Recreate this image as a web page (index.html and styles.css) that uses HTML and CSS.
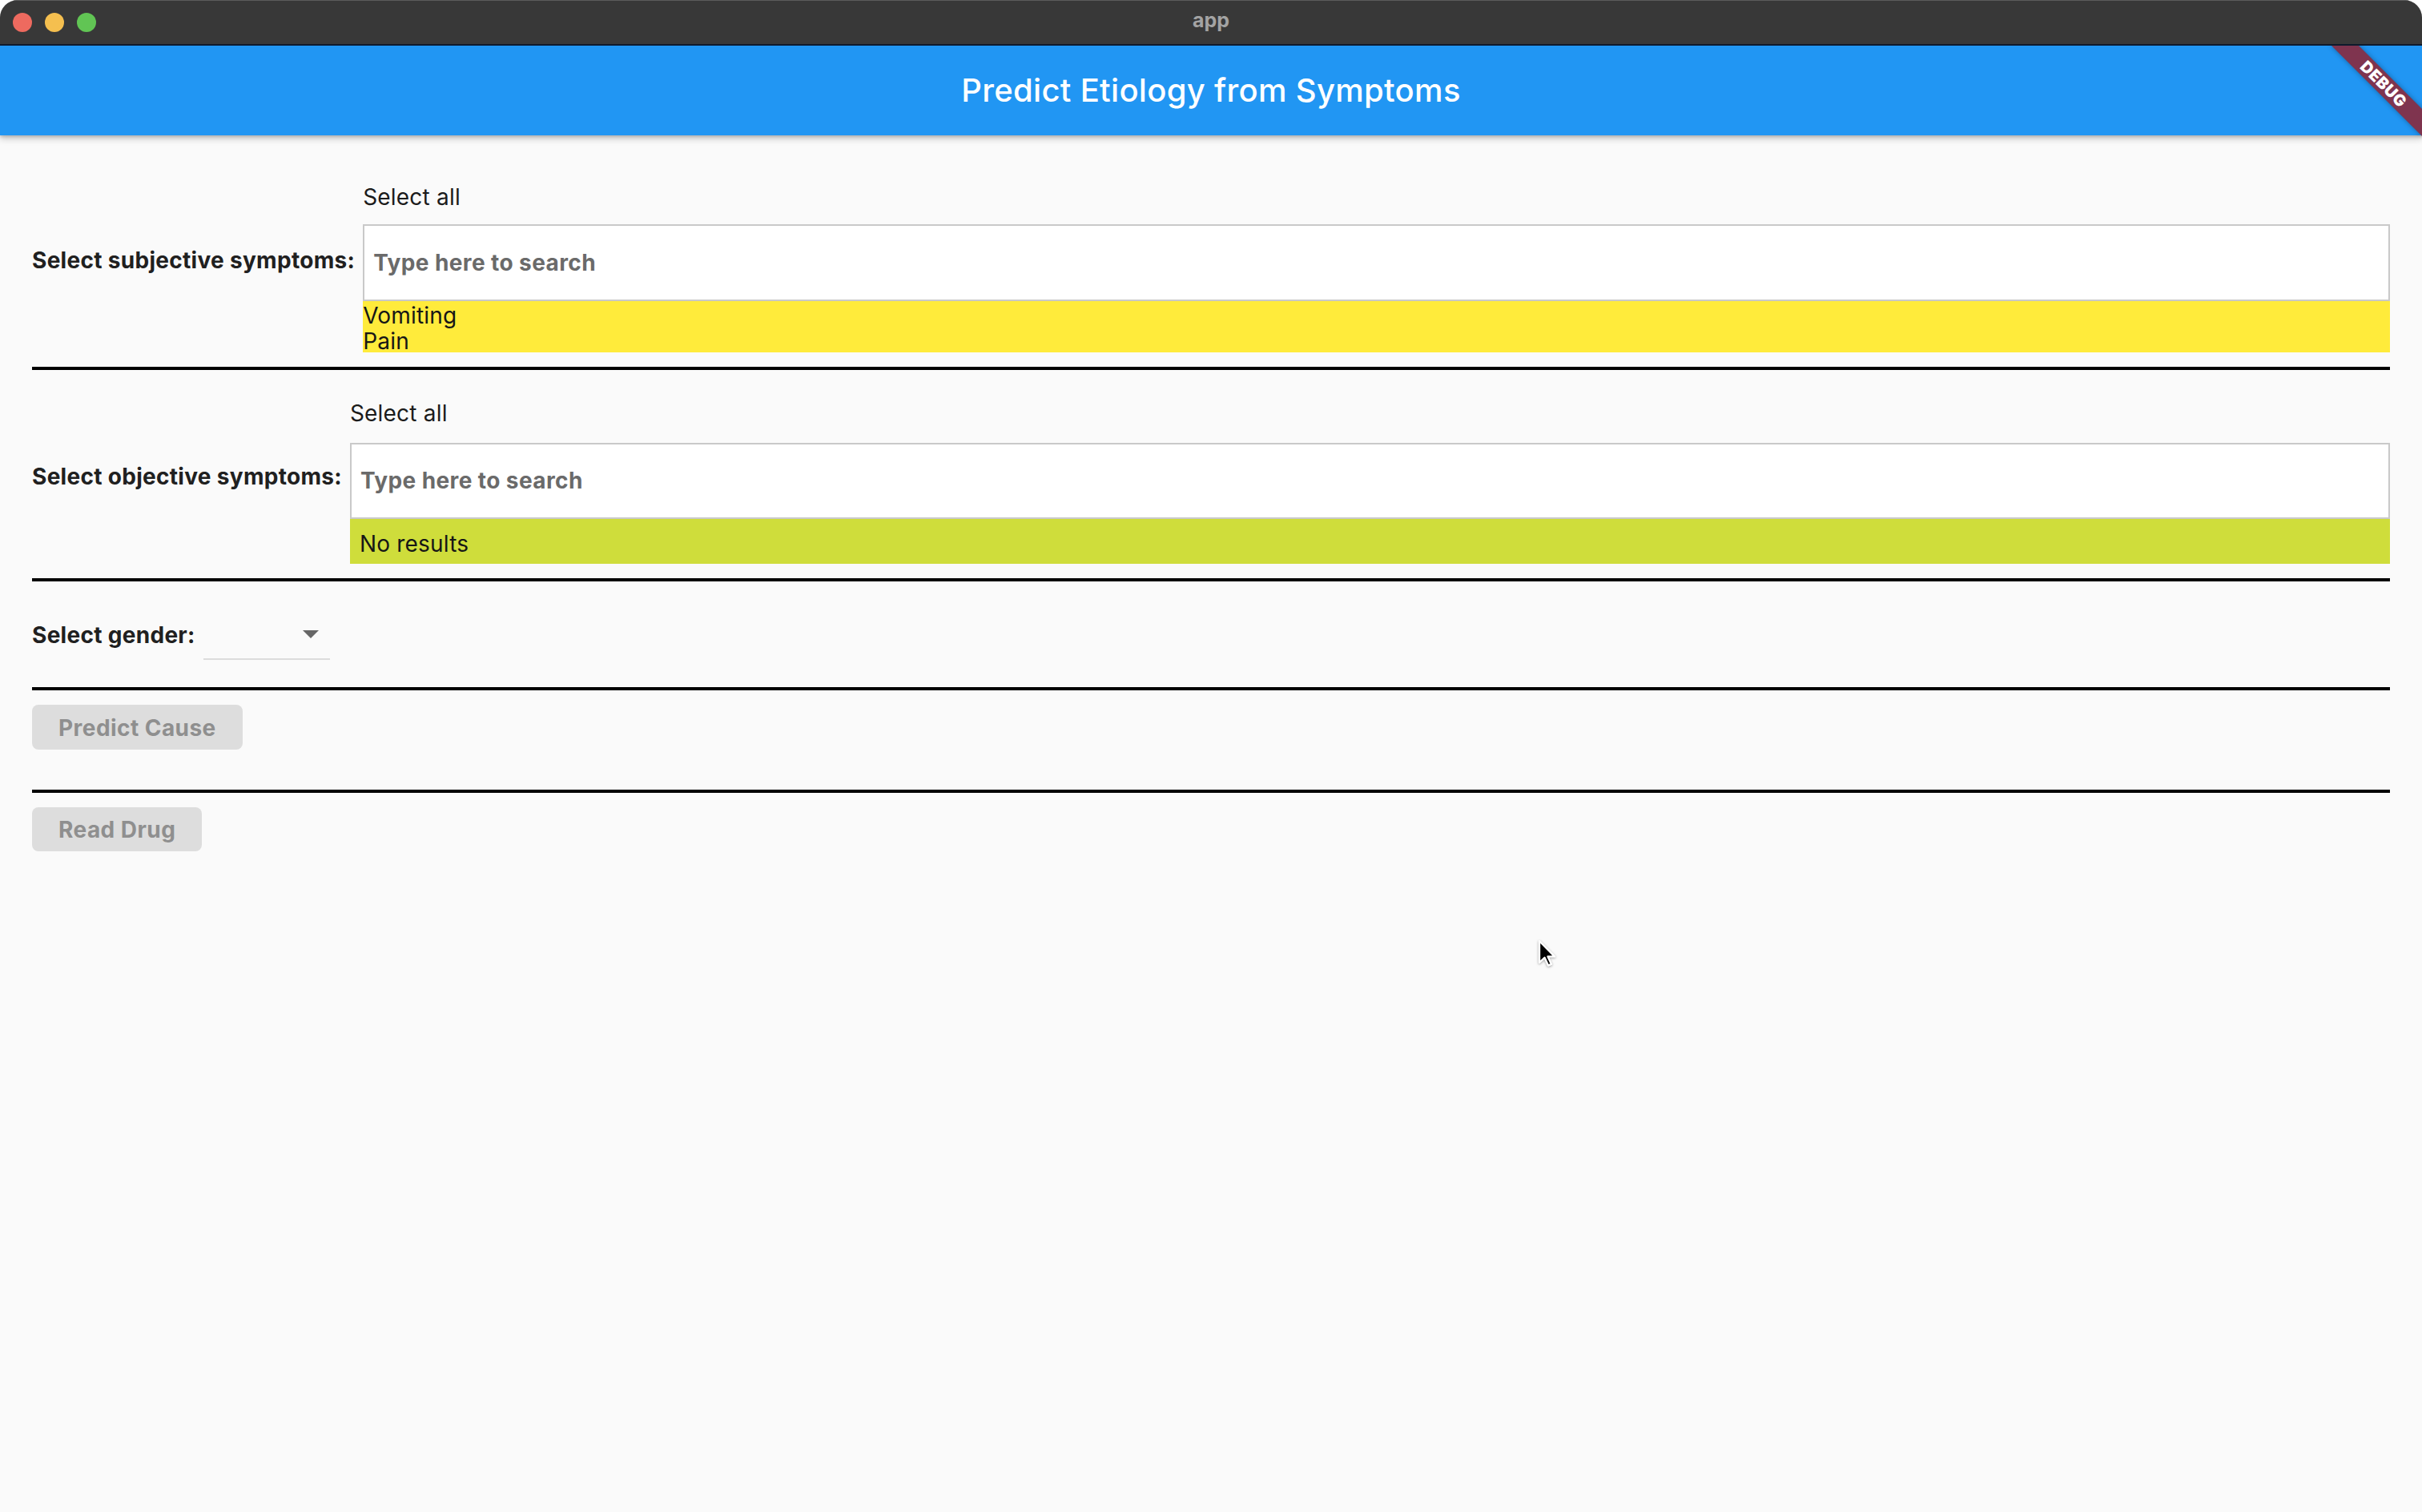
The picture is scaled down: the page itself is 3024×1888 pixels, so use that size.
FILE: index.html
```html
<!DOCTYPE html>
<html lang="en">
<head>
<meta charset="utf-8">
<title>app</title>
<link rel="stylesheet" href="styles.css">
</head>
<body>
<div class="window">
  <div class="titlebar">
    <div class="lights">
      <span class="light l-close"></span>
      <span class="light l-min"></span>
      <span class="light l-max"></span>
    </div>
    <div class="wintitle">app</div>
    <div></div>
  </div>
  <div class="app">
    <header class="appbar"><h1>Predict Etiology from Symptoms</h1></header>
    <div class="banner"><span>DEBUG</span></div>
    <main class="content">
      <section class="row sect1">
        <div class="label">Select subjective symptoms:</div>
        <div class="col">
          <div class="select-all">Select all</div>
          <div class="search"><span class="hint">Type here to search</span></div>
          <div class="results res-yellow">
            <div class="item">Vomiting</div>
            <div class="item">Pain</div>
          </div>
        </div>
      </section>
      <div class="divider d1"></div>
      <section class="row sect2">
        <div class="label">Select objective symptoms:</div>
        <div class="col">
          <div class="select-all">Select all</div>
          <div class="search s2"><span class="hint">Type here to search</span></div>
          <div class="results res-lime">No results</div>
        </div>
      </section>
      <div class="divider d2"></div>
      <section class="gender-row">
        <div class="label">Select gender:</div>
        <div class="dropdown"><span class="arrow"></span></div>
      </section>
      <div class="divider d3"></div>
      <button class="btn b1" disabled>Predict Cause</button>
      <div class="divider d4"></div>
      <button class="btn b2" disabled>Read Drug</button>
    </main>
  </div>
  <svg class="cursor" width="26" height="38" viewBox="0 0 26 38">
    <path d="M3 2 L3 29 L9.5 22.8 L14 32.6 L18 30.9 L13.6 21.4 L22 21.4 Z" fill="#000" stroke="#fff" stroke-width="2.4" stroke-linejoin="round"/>
  </svg>
</div>
</body>
</html>
```

FILE: styles.css
```css
* { box-sizing: border-box; }
html, body { margin: 0; padding: 0; }
body {
  background: #ffffff;
  font-family: Inter, "Noto Sans", "Liberation Sans", sans-serif;
  width: 3024px;
  height: 1888px;
  overflow: hidden;
}
.window {
  position: relative;
  width: 3024px;
  height: 1888px;
  background: #fafafa;
  border-radius: 22px 22px 0 0;
  overflow: hidden;
}
.titlebar {
  height: 57px;
  background: #383838;
  border-bottom: 2px solid #0f1a2c;
  display: grid;
  grid-template-columns: 1fr auto 1fr;
  align-items: start;
  box-shadow: inset 0 1px 0 #5c5c5c;
}
.lights {
  display: flex;
  gap: 16px;
  padding: 16px 0 0 16px;
}
.light {
  width: 24px;
  height: 24px;
  border-radius: 50%;
  display: block;
}
.l-close { background: #ee6a5f; }
.l-min { background: #f5bf4f; }
.l-max { background: #61c554; }
.wintitle {
  color: #a3a3a3;
  font-size: 25px;
  font-weight: 700;
  line-height: 50px;
}
.app {
  position: relative;
  height: 1831px;
  overflow: hidden;
}
.appbar {
  position: relative;
  z-index: 2;
  height: 112px;
  background: #2196f3;
  box-shadow: 0 4px 8px rgba(0,0,0,0.22), 0 2px 3px rgba(0,0,0,0.12);
  display: flex;
  justify-content: center;
}
.appbar h1 {
  margin: 0;
  color: #ffffff;
  font-size: 40px;
  font-weight: 500;
  line-height: 112px;
  letter-spacing: 0.3px;
}
.banner {
  position: absolute;
  z-index: 3;
  left: 2896px;
  top: 36px;
  width: 160px;
  height: 24px;
  background: #7f344f;
  transform: rotate(45deg);
  display: flex;
  align-items: center;
  justify-content: center;
  box-shadow: 0 0 6px rgba(0,0,0,0.35);
}
.banner span {
  color: #ffffff;
  font-size: 20px;
  font-weight: 900;
  line-height: 20px;
  letter-spacing: 0.5px;
}
.content {
  padding: 61px 40px 0 40px;
  color: #1e1e1e;
}
.row {
  display: flex;
  align-items: center;
  gap: 10px;
}
.label {
  font-size: 28px;
  font-weight: 700;
  line-height: 33px;
  color: #202020;
  white-space: nowrap;
  letter-spacing: 0.3px;
}
.sect1 .label { margin-bottom: 20px; }
.sect2 .label { margin-bottom: 14px; }
.col {
  flex: 1;
  display: flex;
  flex-direction: column;
}
.select-all {
  font-size: 28px;
  line-height: 33px;
  color: #1b1b1b;
  margin-bottom: 17px;
  letter-spacing: 0.2px;
}
.sect2 .select-all { margin-bottom: 20px; }
.search {
  height: 96px;
  background: #ffffff;
  border: 2px solid #c9c9c9;
  display: flex;
  align-items: center;
  padding-left: 11px;
}
.search.s2 { height: 95px; }
.hint {
  font-size: 28px;
  font-weight: 700;
  line-height: 33px;
  color: #6a6a6a;
  letter-spacing: 0.4px;
}
.results {
  font-size: 28px;
  color: #161616;
  letter-spacing: 0.2px;
}
.res-yellow {
  background: #ffeb3b;
  height: 64px;
  line-height: 32px;
  padding-top: 2px;
}
.res-lime {
  background: #cfdd3b;
  height: 56px;
  line-height: 50px;
  padding: 6px 0 0 12px;
}
.divider {
  height: 4px;
  background: #000000;
}
.d1 { margin-top: 18px; }
.sect2 { margin-top: 38px; }
.d2 { margin-top: 18px; }
.gender-row {
  margin-top: 51px;
  display: flex;
  align-items: flex-start;
  gap: 10px;
}
.dropdown {
  position: relative;
  width: 158px;
  height: 47px;
  border-bottom: 2px solid #dcdcdc;
  display: flex;
  justify-content: flex-end;
  padding: 10px 14px 0 0;
}
.arrow {
  width: 0;
  height: 0;
  border-left: 10px solid transparent;
  border-right: 10px solid transparent;
  border-top: 10px solid #666666;
}
.d3 { margin-top: 34px; }
.btn {
  display: block;
  border: none;
  border-radius: 8px;
  background: #dddddd;
  color: #8f8f8f;
  font-family: Inter, "Noto Sans", "Liberation Sans", sans-serif;
  font-size: 28px;
  font-weight: 700;
  letter-spacing: 0.45px;
  height: 56px;
  line-height: 58px;
  padding: 0 33px;
  margin: 18px 0 0 0;
}
.b2 { height: 55px; line-height: 57px; }
.d4 { margin-top: 50px; }
.cursor {
  position: absolute;
  left: 1919px;
  top: 1173px;
  filter: drop-shadow(0 1px 1.5px rgba(0,0,0,0.35));
}
```
